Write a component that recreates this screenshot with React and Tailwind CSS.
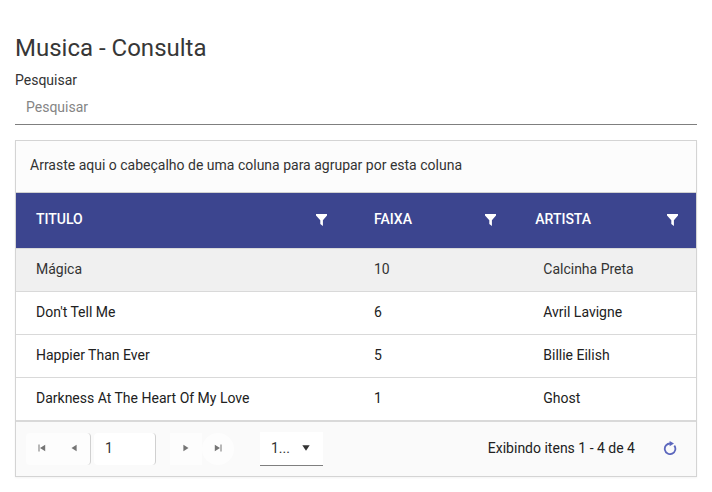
import React from "react";

const rows = [
  { titulo: "Mágica", faixa: 10, artista: "Calcinha Preta" },
  { titulo: "Don't Tell Me", faixa: 6, artista: "Avril Lavigne" },
  { titulo: "Happier Than Ever", faixa: 5, artista: "Billie Eilish" },
  { titulo: "Darkness At The Heart Of My Love", faixa: 1, artista: "Ghost" },
];

function FilterIcon() {
  return (
    <svg width="11" height="12" viewBox="0 0 11 12" fill="currentColor" aria-hidden="true">
      <path d="M0 0h11v1.6L6.9 6.2V12L4.3 10V6.2L0 1.6z" />
    </svg>
  );
}

function HeaderCell({ label, className }) {
  return (
    <th
      scope="col"
      className={"h-14 border-b border-[#d9d9d9] pt-0 pb-[3px] text-left font-medium " + className}
    >
      <div className="flex items-center justify-between">
        <span>{label}</span>
        <button type="button" aria-label={"Filtrar " + label} className="pt-[2px]">
          <FilterIcon />
        </button>
      </div>
    </th>
  );
}

function PagerButton({ label, className, children }) {
  return (
    <button
      type="button"
      aria-label={label}
      className={"flex h-8 w-8 items-center justify-center pb-[2px] text-[#757575] " + className}
    >
      <svg width="8" height="8" viewBox="0 0 8 8" fill="currentColor" aria-hidden="true">
        {children}
      </svg>
    </button>
  );
}

function Pager() {
  return (
    <div className="flex items-center border-t border-[#d9d9d9] bg-[#fafafa] py-[10px] pr-[19px] pl-[10px]">
      <div className="flex rounded border-r border-[#d0d0d0] bg-[#fdfdfd]">
        <PagerButton label="Primeira página" className="">
          <path d="M0.5 0.5h1v7h-1zM7.2 0.8v6.4L2 4z" />
        </PagerButton>
        <PagerButton label="Página anterior" className="">
          <path d="M6.6 0.8v6.4L1.5 4z" />
        </PagerButton>
      </div>
      <input
        aria-label="Página"
        defaultValue="1"
        className="ml-[3px] h-8 w-[62px] rounded border-r border-[#d0d0d0] bg-white pb-[2px] pl-[11px] text-sm text-[#333] outline-none"
      />
      <div className="ml-[14px] flex">
        <PagerButton label="Próxima página" className="bg-[#fdfdfd]">
          <path d="M1.4 0.8v6.4L6.5 4z" />
        </PagerButton>
        <PagerButton label="Última página" className="rounded-full bg-[#fdfdfd]">
          <path d="M6.5 0.5h1v7h-1zM0.8 0.8v6.4L6 4z" />
        </PagerButton>
      </div>
      <div className="relative ml-[26px]">
        <select
          aria-label="Itens por página"
          className="block h-[34px] w-[63px] appearance-none border-b border-[#7f7f7f] bg-white pb-[2px] pl-[11px] text-sm text-[#333] outline-none"
        >
          <option value="10">1...</option>
        </select>
        <svg
          width="8"
          height="6"
          viewBox="0 0 8 6"
          fill="#333"
          aria-hidden="true"
          className="pointer-events-none absolute top-[13px] right-[13px]"
        >
          <path d="M0.3 0.3h7.4L4 5.7z" />
        </svg>
      </div>
      <span className="ml-auto pb-[2px]">Exibindo itens 1 - 4 de 4</span>
      <button type="button" aria-label="Atualizar" className="ml-7 pb-[2px] text-[#5c67bd]">
        <svg width="14" height="14" viewBox="0 0 14 14" aria-hidden="true">
          <path d="M11.3 4.6A5.3 5.3 0 1 1 7.2 2.5" fill="none" stroke="currentColor" strokeWidth="1.8" />
          <path d="M6.6 0l4.4 2.5-4.4 2.7z" fill="currentColor" />
        </svg>
      </button>
    </div>
  );
}

export default function App() {
  return (
    <main className="px-[15px] pt-8 pb-4 font-['Roboto',sans-serif] text-sm text-[#212121]">
      <h1 className="text-2xl text-[#373737]">Musica - Consulta</h1>
      <label htmlFor="pesquisar" className="mt-[6px] block text-[#333]">
        Pesquisar
      </label>
      <input
        id="pesquisar"
        type="text"
        placeholder="Pesquisar"
        className="block h-[35px] w-full border-b border-[#7f7f7f] bg-white px-[11px] text-sm outline-none placeholder:text-[#858585]"
      />
      <section className="mt-[15px] border border-[#d4d4d4] shadow-xs">
        <div className="border-b border-[#d0d0d0] bg-[#fcfcfc] px-[14px] pt-[14px] pb-[17px] text-[#333]">
          Arraste aqui o cabeçalho de uma coluna para agrupar por esta coluna
        </div>
        <table className="w-full table-fixed border-separate border-spacing-0">
          <colgroup>
            <col className="w-[49.7%]" />
            <col className="w-[24.9%]" />
            <col />
          </colgroup>
          <thead className="bg-[#3c458f] text-white">
            <tr>
              <HeaderCell label="TITULO" className="pr-[27px] pl-5" />
              <HeaderCell label="FAIXA" className="pr-[27px] pl-5" />
              <HeaderCell label="ARTISTA" className="pr-[18px] pl-3" />
            </tr>
          </thead>
          <tbody>
            {rows.map((row, i) => (
              <tr key={row.titulo} className={i === 0 ? "bg-[#f0f0f0] text-[#333]" : "bg-white"}>
                <td className="h-[43px] border-b border-[#d9d9d9] pt-0 pb-[3px] pl-5">{row.titulo}</td>
                <td className="border-b border-[#d9d9d9] pt-0 pb-[3px] pl-5">{row.faixa}</td>
                <td className="border-b border-[#d9d9d9] pt-0 pb-[3px] pl-5">{row.artista}</td>
              </tr>
            ))}
          </tbody>
        </table>
        <Pager />
      </section>
    </main>
  );
}
